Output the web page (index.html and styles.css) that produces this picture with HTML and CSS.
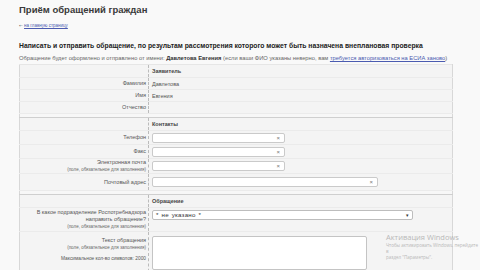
FILE: index.html
```html
<!DOCTYPE html>
<html lang="ru">
<head>
<meta charset="utf-8">
<link rel="stylesheet" href="styles.css">
</head>
<body>
<div class="page">
  <h1 class="title">Приём обращений граждан</h1>
  <div class="back"><span class="larr">←</span> <a href="#">на главную страницу</a></div>
  <h2 class="subtitle">Написать и отправить обращение, по результам рассмотрения которого может быть назначена внеплановая проверка</h2>
  <p class="note">Обращение будет оформлено и отправлено от имени: <b>Давлетова Евгения</b> (если ваши ФИО указаны неверно, вам <a href="#">требуется авторизоваться на ЕСИА заново</a>)</p>

  <table class="form">
    <tr class="head"><td class="lbl"></td><td class="val">Заявитель</td></tr>
    <tr class="row"><td class="lbl">Фамилия</td><td class="val">Давлетова</td></tr>
    <tr class="row"><td class="lbl">Имя</td><td class="val">Евгения</td></tr>
    <tr class="row"><td class="lbl">Отчество</td><td class="val"></td></tr>
    <tr class="sep"><td colspan="2"></td></tr>
    <tr class="head"><td class="lbl"></td><td class="val">Контакты</td></tr>
    <tr class="row inrow"><td class="lbl">Телефон</td><td class="val"><span class="input short"><span class="clr">×</span></span></td></tr>
    <tr class="row inrow"><td class="lbl">Факс</td><td class="val"><span class="input short"><span class="clr">×</span></span></td></tr>
    <tr class="row inrow"><td class="lbl">Электронная почта<br><small>(поле, обязательное для заполнения)</small></td><td class="val"><span class="input short"><span class="clr">×</span></span></td></tr>
    <tr class="row inrow tall"><td class="lbl">Почтовый адрес</td><td class="val"><span class="input long"><span class="clr">×</span></span></td></tr>
    <tr class="sep"><td colspan="2"></td></tr>
    <tr class="head"><td class="lbl"></td><td class="val">Обращение</td></tr>
    <tr class="row selrow"><td class="lbl">В какое подразделение Роспотребнадзора<br>направить обращение?<br><small>(поле, обязательное для заполнения)</small></td><td class="val top"><span class="select">* не указано *<span class="arr">▾</span></span></td></tr>
    <tr class="row txtrow"><td class="lbl top">Текст обращения<br><small>(поле, обязательное для заполнения)</small><div class="max">Максимальное кол-во символов: 2000</div></td><td class="val top"><span class="textarea"></span></td></tr>
  </table>
</div>
<div class="watermark">
  <div class="wm-title">Активация Windows</div>
  <div class="wm-text">Чтобы активировать Windows, перейдите в<br>раздел "Параметры".</div>
</div>
</body>
</html>
```
FILE: styles.css
```css
html, body {
  margin: 0;
  padding: 0;
  background: #f9f9f9;
  font-family: "Liberation Sans", Arial, sans-serif;
  color: #333;
  overflow: hidden;
}
.page {
  padding: 0 20px 0 19px;
}
.title {
  margin: 0;
  padding-top: 4px;
  font-size: 9.5px;
  line-height: 12px;
  font-weight: bold;
  color: #3a3a3a;
}
.back {
  margin-top: 7px;
  font-size: 4.5px;
  line-height: 6px;
  color: #555;
  white-space: nowrap;
}
.larr {
  font-family: "DejaVu Sans", sans-serif;
  font-size: 4.5px;
}
.back a, .note a {
  color: #4b5bb0;
  text-decoration: underline;
}
.subtitle {
  margin: 12px 0 0;
  font-size: 6.8px;
  line-height: 9px;
  font-weight: bold;
  color: #222;
  white-space: nowrap;
}
.note {
  margin: 4px 0 0;
  font-size: 5.75px;
  line-height: 8px;
  color: #666;
  white-space: nowrap;
}
.note b {
  color: #333;
}
.form {
  margin-top: 2px;
  width: 434px;
  border-collapse: collapse;
  background: #f4f4f4;
  border-left: 1px solid #d8d8d8;
  border-right: 1px solid #d8d8d8;
  border-top: 1px solid #e6e6e6;
  font-size: 5.5px;
  color: #555;
}
.form td {
  padding: 0;
  vertical-align: middle;
}
.lbl {
  width: 126px;
  text-align: right;
  padding-right: 2px !important;
  line-height: 7px;
  white-space: nowrap;
}
.lbl small {
  font-size: 4.5px;
  color: #666;
}
.val {
  border-left: 1px dashed #bbb;
  padding-left: 3px !important;
}
.head td {
  height: 12px;
  border-bottom: 1px solid #ebebeb;
}
.head .val {
  font-weight: bold;
  color: #444;
  font-size: 5.5px;
}
.row td {
  height: 11px;
  border-bottom: 1px solid #ebebeb;
}
.inrow td { height: 13px; }
.inrow.tall td { height: 16px; }
.sep td {
  height: 3px;
  border-top: 1px solid #cfcfcf;
  border-bottom: 1px solid #cfcfcf;
  background: #f7f7f7;
}
.input {
  display: block;
  position: relative;
  height: 8px;
  background: #fff;
  border: 1px solid #cacaca;
  border-radius: 2px;
}
.input.short { width: 131px; }
.input.long { width: 224px; }
.clr {
  position: absolute;
  right: 4px;
  top: 1px;
  font-size: 6px;
  line-height: 6px;
  color: #777;
}
.top { vertical-align: top !important; }
.selrow td { height: 21px; }
.selrow .val { padding-top: 2px !important; }
.select {
  display: block;
  position: relative;
  width: 256px;
  height: 8px;
  line-height: 8px;
  padding-left: 3px;
  background: #fff;
  border: 1px solid #bdbdbd;
  border-radius: 2px;
  font-size: 6.2px;
  letter-spacing: 0.2px;
  word-spacing: 1px;
  color: #333;
}
.arr {
  position: absolute;
  right: 3px;
  top: 0;
  font-size: 5px;
}
.txtrow td { height: 40px; }
.txtrow .lbl { padding-top: 5px !important; }
.txtrow .val { padding-top: 4px !important; }
.max {
  margin-top: 4px;
  font-size: 4.8px;
}
.textarea {
  display: block;
  width: 213px;
  height: 32px;
  background: #fff;
  border: 1px solid #c4c4c4;
  border-radius: 2px;
}
.watermark {
  position: absolute;
  left: 386px;
  top: 232px;
  color: #b8b8b8;
  font-family: "Open Sans", "Liberation Sans", sans-serif;
}
.wm-title {
  font-size: 7.5px;
  line-height: 10px;
}
.wm-text {
  font-size: 4.5px;
  line-height: 6px;
}
```
